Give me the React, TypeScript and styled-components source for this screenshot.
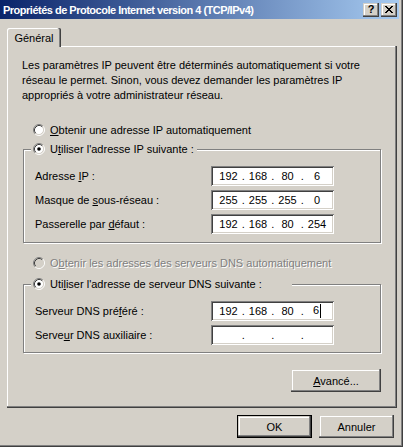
import React from 'react';
import styled, { createGlobalStyle } from 'styled-components';

const face = '#d4d0c8';

const GlobalStyle = createGlobalStyle`
  html, body {
    margin: 0;
    padding: 0;
    background: ${face};
  }
  body {
    font-family: "Liberation Sans", Arial, sans-serif;
    font-size: 11px;
    color: #000;
  }
  * {
    box-sizing: border-box;
  }
`;

const raised = `
  box-shadow: inset -1px -1px #404040, inset -2px -2px #808080,
    inset 1px 1px ${face}, inset 2px 2px #fff;
`;

const Window = styled.div`
  width: 403px;
  height: 447px;
  background: ${face};
  display: flex;
  flex-direction: column;
  padding: 0 4px 3px 0;
  box-shadow: inset -1px -1px #404040, inset -2px -2px #808080;
`;

const TitleBar = styled.div`
  height: 19px;
  flex: none;
  display: flex;
  align-items: center;
  padding: 0 2px 0 3px;
  background: linear-gradient(to right, #0a246a, #a6caf0);
  color: #fff;
  font-weight: bold;
  white-space: nowrap;
`;

const Title = styled.div`
  flex: 1;
  letter-spacing: -0.5px;
`;

const CaptionButtons = styled.div`
  display: flex;
  gap: 2px;
`;

const CaptionButton = styled.div`
  width: 16px;
  height: 14px;
  background: ${face};
  color: #000;
  display: flex;
  align-items: center;
  justify-content: center;
  font-weight: bold;
  font-size: 11px;
  line-height: 1;
  ${raised}
`;

const Body = styled.div`
  flex: 1;
  display: flex;
  flex-direction: column;
  padding: 9px 0 0 7px;
`;

const TabStrip = styled.div`
  display: flex;
  height: 18px;
  position: relative;
  z-index: 1;
`;

const Tab = styled.div`
  width: 54px;
  height: 19px;
  display: flex;
  align-items: center;
  justify-content: center;
  padding-top: 1px;
  background: ${face};
  border-radius: 2px 2px 0 0;
  box-shadow: inset -1px 0 #404040, inset -2px 0 #808080, inset 1px 1px #fff;
`;

const Panel = styled.div`
  width: 390px;
  height: 362px;
  display: flex;
  flex-direction: column;
  padding: 12px 15px 0 15px;
  box-shadow: inset -1px -1px #404040, inset -2px -2px #808080, inset 1px 1px #fff;
`;

const Intro = styled.p`
  margin: 0;
  line-height: 15px;
`;

const RadioRow = styled.div<{ $top: number }>`
  display: flex;
  align-items: center;
  gap: 5px;
  height: 16px;
  margin-top: ${(p) => p.$top}px;
  padding-left: 11px;
`;

const RadioText = styled.span<{ $disabled?: boolean }>`
  white-space: nowrap;
  color: ${(p) => (p.$disabled ? '#808080' : '#000')};
  text-shadow: ${(p) => (p.$disabled ? '1px 1px #fff' : 'none')};
`;

const Group = styled.fieldset<{ $top: number; $bottom: number }>`
  margin: ${(p) => p.$top}px 0 0 1px;
  width: 358px;
  padding: 9px 46px ${(p) => p.$bottom}px 11px;
  border: 1px solid #808080;
  box-shadow: inset 1px 1px #fff, 1px 1px #fff;
  min-inline-size: 0;
`;

const Legend = styled.legend`
  margin-left: -4px;
  padding: 0;
  background: ${face};
`;

const LegendBody = styled.div<{ $width?: number }>`
  width: ${(p) => (p.$width ? `${p.$width}px` : 'auto')};
  height: 16px;
  padding: 0 3px 0 2px;
  display: flex;
  align-items: center;
  gap: 5px;
`;

const Rows = styled.div`
  display: grid;
  grid-template-columns: 176px 123px;
  grid-auto-rows: 20px;
  row-gap: 4px;
  align-items: center;
`;

const IpBox = styled.div`
  height: 20px;
  background: #fff;
  display: grid;
  grid-template-columns: 22px 7.5px 22px 7.5px 22px 7.5px 22px;
  align-items: center;
  padding-left: 6.5px;
  text-align: center;
  box-shadow: inset 1px 1px #808080, inset -1px -1px #fff,
    inset 2px 2px #404040, inset -2px -2px ${face};
`;

const Caret = styled.span`
  display: inline-block;
  width: 1px;
  height: 14px;
  margin-left: 1px;
  background: #000;
  vertical-align: middle;
`;

const Button = styled.div<{ $width: number; $default?: boolean }>`
  width: ${(p) => p.$width}px;
  height: 23px;
  display: flex;
  align-items: center;
  justify-content: center;
  background: ${face};
  border: ${(p) => (p.$default ? '1px solid #000' : 'none')};
  ${raised}
`;

const AdvancedButton = styled(Button)`
  align-self: flex-end;
  margin: 16px 1px 0 0;
`;

const Footer = styled.div`
  display: flex;
  justify-content: flex-end;
  gap: 7px;
  margin-top: 7px;
  padding-right: 5px;
`;

const Radio = ({ checked, disabled }: { checked?: boolean; disabled?: boolean }) => (
  <svg width="12" height="12" viewBox="0 0 12 12" style={{ flex: 'none' }}>
    <circle cx="6" cy="6" r="4.5" fill={disabled ? face : '#fff'} />
    <path d="M2.11 9.89 A5.5 5.5 0 0 1 9.89 2.11" fill="none" stroke="#808080" />
    <path d="M9.89 2.11 A5.5 5.5 0 0 1 2.11 9.89" fill="none" stroke="#fff" />
    <path d="M2.82 9.18 A4.5 4.5 0 0 1 9.18 2.82" fill="none" stroke="#404040" />
    <path d="M9.18 2.82 A4.5 4.5 0 0 1 2.82 9.18" fill="none" stroke={face} />
    {checked && <circle cx="6" cy="6" r="1.8" fill="#000" />}
  </svg>
);

const closePixels = [
  [0, 0, 2], [6, 0, 2],
  [1, 1, 2], [5, 1, 2],
  [2, 2, 4],
  [3, 3, 2],
  [2, 4, 4],
  [1, 5, 2], [5, 5, 2],
  [0, 6, 2], [6, 6, 2],
];

const CloseIcon = () => (
  <svg width="8" height="7" viewBox="0 0 8 7" shapeRendering="crispEdges">
    {closePixels.map(([x, y, w], i) => (
      <rect key={i} x={x} y={y} width={w} height={1} fill="#000" />
    ))}
  </svg>
);

const IpField = ({ octets, caret }: { octets: string[]; caret?: boolean }) => (
  <IpBox>
    {octets.map((o, i) => (
      <React.Fragment key={i}>
        {i > 0 && <span>.</span>}
        <span>
          {o}
          {caret && i === 3 && <Caret />}
        </span>
      </React.Fragment>
    ))}
  </IpBox>
);

const App = () => (
  <Window>
    <GlobalStyle />
    <TitleBar>
      <Title>Propriétés de Protocole Internet version 4 (TCP/IPv4)</Title>
      <CaptionButtons>
        <CaptionButton>?</CaptionButton>
        <CaptionButton>
          <CloseIcon />
        </CaptionButton>
      </CaptionButtons>
    </TitleBar>
    <Body>
      <TabStrip>
        <Tab>Général</Tab>
      </TabStrip>
      <Panel>
        <Intro>
          Les paramètres IP peuvent être déterminés automatiquement si votre
          <br />
          réseau le permet. Sinon, vous devez demander les paramètres IP
          <br />
          appropriés à votre administrateur réseau.
        </Intro>

        <RadioRow $top={19}>
          <Radio />
          <RadioText>
            <u>O</u>btenir une adresse IP automatiquement
          </RadioText>
        </RadioRow>
        <Group $top={3} $bottom={8}>
          <Legend>
            <LegendBody>
              <Radio checked />
              <RadioText>
                U<u>t</u>iliser l'adresse IP suivante :
              </RadioText>
            </LegendBody>
          </Legend>
          <Rows>
            <span>
              Adresse <u>I</u>P :
            </span>
            <IpField octets={['192', '168', '80', '6']} />
            <span>
              Masque de <u>s</u>ous-réseau :
            </span>
            <IpField octets={['255', '255', '255', '0']} />
            <span>
              Passerelle par <u>d</u>éfaut :
            </span>
            <IpField octets={['192', '168', '80', '254']} />
          </Rows>
        </Group>

        <RadioRow $top={12}>
          <Radio disabled />
          <RadioText $disabled>
            O<u>b</u>tenir les adresses des serveurs DNS automatiquement
          </RadioText>
        </RadioRow>
        <Group $top={5} $bottom={7}>
          <Legend>
            <LegendBody $width={261}>
              <Radio checked />
              <RadioText>
                Uti<u>l</u>iser l'adresse de serveur DNS suivante :
              </RadioText>
            </LegendBody>
          </Legend>
          <Rows>
            <span>
              Serveur DNS pré<u>f</u>éré :
            </span>
            <IpField octets={['192', '168', '80', '6']} caret />
            <span>
              Serve<u>u</u>r DNS auxiliaire :
            </span>
            <IpField octets={['', '', '', '']} />
          </Rows>
        </Group>

        <AdvancedButton $width={90}>
          <span>
            <u>A</u>vancé...
          </span>
        </AdvancedButton>
      </Panel>
      <Footer>
        <Button $width={75} $default>
          OK
        </Button>
        <Button $width={75}>Annuler</Button>
      </Footer>
    </Body>
  </Window>
);

export default App;
